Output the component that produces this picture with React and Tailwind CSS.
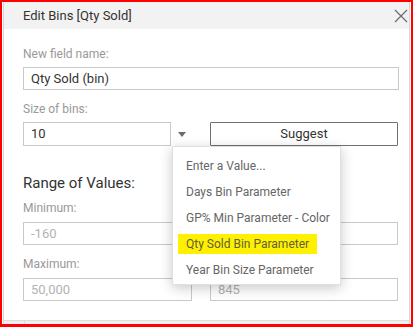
import React from 'react';

const menuItems = [
  'Enter a Value...',
  'Days Bin Parameter',
  'GP% Min Parameter - Color',
  'Qty Sold Bin Parameter',
  'Year Bin Size Parameter',
];

function Field({ value, className = '' }) {
  return (
    <div className={`h-[23px] border border-[#c9c9c9] flex items-center pl-[7px] text-[13px] ${className}`}>
      {value}
    </div>
  );
}

export default function App() {
  const selected = 'Qty Sold Bin Parameter';

  return (
    <div
      className="w-[413px] h-[327px] border-2 border-b-[3px] border-[#ff0000] bg-white flex flex-col overflow-hidden"
      style={{ fontFamily: 'Roboto, "Liberation Sans", sans-serif' }}
    >
      <div className="flex-1 mx-[1px] border-x border-[#d6d6d6] flex flex-col">
        {/* header */}
        <div className="h-[27px] bg-[#f2f2f2] flex items-center justify-between pl-[19px] pr-[1px] shrink-0">
          <span className="text-[13px] text-[#333]">Edit Bins [Qty Sold]</span>
          <svg width="14" height="14" viewBox="0 0 14 14" className="text-[#6b6b6b]">
            <path d="M1 1 L13 13 M13 1 L1 13" stroke="currentColor" strokeWidth="1.2" fill="none" />
          </svg>
        </div>

        {/* body */}
        <div className="relative pl-[19px] pr-[10px] flex flex-col">
          <div className="mt-[17px] text-[12px] leading-[16px] text-[#999]">New field name:</div>
          <Field value="Qty Sold (bin)" className="mt-[5px] text-[#333]" />

          <div className="mt-[11px] text-[12px] leading-[16px] text-[#999]">Size of bins:</div>
          <div className="mt-[5px] grid grid-cols-[169px_188px] gap-x-[18px]">
            <div className="flex h-[24px]">
              <div className="w-[148px] border border-[#c9c9c9] flex items-center pl-[7px] text-[13px] text-[#333]">10</div>
              <div className="flex-1 flex items-center justify-center">
                <svg width="8" height="5" viewBox="0 0 8 5">
                  <path d="M0 0 H8 L4 5 Z" fill="#6b6b6b" />
                </svg>
              </div>
            </div>
            <button className="h-[24px] border border-[#707070] rounded-[1px] text-[13px] text-[#333] bg-white">
              Suggest
            </button>
          </div>

          <div className="mt-[27px] text-[15px] leading-[20px] text-[#333]">Range of Values:</div>
          <div className="mt-[7px] grid grid-cols-[169px_188px] gap-x-[18px]">
            <div>
              <div className="text-[12px] leading-[16px] text-[#999]">Minimum:</div>
              <Field value="-160" className="mt-[6px] h-[22px] text-[#b3b3b3]" />
            </div>
            <div>
              <div className="h-[16px]" />
              <Field value="" className="mt-[6px] h-[22px] text-[#b3b3b3]" />
            </div>
          </div>
          <div className="mt-[11px] grid grid-cols-[169px_188px] gap-x-[18px]">
            <div>
              <div className="text-[12px] leading-[16px] text-[#999]">Maximum:</div>
              <Field value="50,000" className="mt-[6px] h-[22px] text-[#b3b3b3]" />
            </div>
            <div>
              <div className="h-[16px]" />
              <Field value="845" className="mt-[6px] h-[22px] text-[#b3b3b3]" />
            </div>
          </div>

          {/* dropdown menu */}
          <div className="absolute left-[168px] top-[117px] w-[169px] h-[139px] bg-white border border-[#e0e0e0] shadow-[0_3px_12px_rgba(0,0,0,0.22)] pt-[6px] pl-[5px]">
            {menuItems.map((item) => (
              <div key={item} className="h-[26px] flex items-center">
                <span
                  className={`px-[8px] h-[20px] flex items-center text-[12px] ${
                    item === selected ? 'bg-[#fff000] text-[#5f5f3a]' : 'text-[#666]'
                  }`}
                >
                  {item}
                </span>
              </div>
            ))}
          </div>
        </div>

        {/* footer strip */}
        <div className="mt-auto h-[4px] bg-[#efefef] border-t border-[#dddddd] flex shrink-0">
          <div className="w-[21px] border-r border-[#dddddd]" />
        </div>
      </div>
    </div>
  );
}
